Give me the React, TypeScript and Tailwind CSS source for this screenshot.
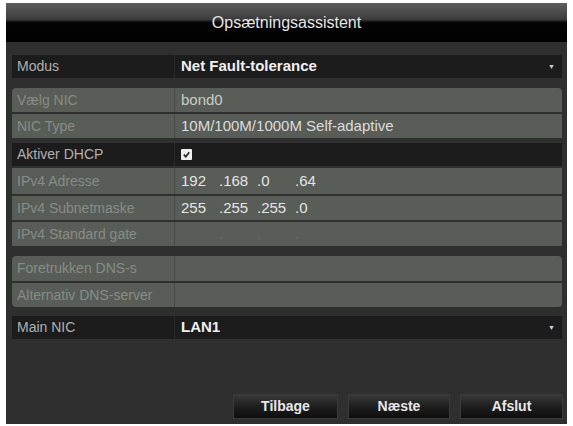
import React from "react";

const font = { fontFamily: '"Liberation Sans", Arial, sans-serif' };

function Row({
  label,
  children,
  dark,
  className = "",
}: {
  label: string;
  children?: React.ReactNode;
  dark?: boolean;
  className?: string;
}) {
  return (
    <div
      className={`flex items-center ${
        dark ? "bg-[#1c1c1c]" : "bg-[#585d57]"
      } ${className}`}
    >
      <div
        className={`w-[163px] h-full flex items-center pl-[5px] text-[14px] whitespace-nowrap overflow-hidden border-r ${
          dark ? "text-[#b0b0b0] border-[#2a2a2a]" : "text-[#878c86] border-[#464a45]"
        }`}
      >
        {label}
      </div>
      <div className="flex-1 h-full flex items-center pl-[6px] pr-[5px]">
        {children}
      </div>
    </div>
  );
}

function Ip({ parts, faint }: { parts: string[]; faint?: boolean }) {
  return (
    <div className={`flex text-[15px] ${faint ? "text-[#6a6e69]" : "text-[#e4e4e4]"}`}>
      {parts.map((p, i) => (
        <span key={i} className="w-[38px]">
          {i > 0 ? "." : ""}
          {p}
        </span>
      ))}
    </div>
  );
}

function Arrow() {
  return <span className="ml-auto mr-[2px] text-[7px] text-[#cfcfcf] leading-none">▼</span>;
}

export default function App() {
  return (
    <div className="w-[573px] h-[426px] bg-white pt-[3px] pl-[6px]" style={font}>
      <div className="w-[561px] h-[421px] bg-[#2f2f2f] flex flex-col">
        <div className="h-[39px] flex items-start justify-center pt-[8px] text-[16px] text-[#e6e6e6] bg-[linear-gradient(to_bottom,#5e5e5e_0%,#3c3c3c_42%,#050505_50%,#000_100%)]">
          Opsætningsassistent
        </div>

        <div className="flex flex-col pl-[6px] pr-[5px] pt-[13px]">
          <Row label="Modus" dark className="h-[23px]">
            <span className="text-[15px] font-bold text-[#f0f0f0]">Net Fault-tolerance</span>
            <Arrow />
          </Row>

          <div className="mt-[10px] flex flex-col gap-[2px] rounded-t-[4px] overflow-hidden">
            <Row label="Vælg NIC" className="h-[24px]">
              <span className="text-[15px] text-[#c9ccc8]">bond0</span>
            </Row>
            <Row label="NIC Type" className="h-[24px]">
              <span className="text-[15px] text-[#dcdcdc]">10M/100M/1000M Self-adaptive</span>
            </Row>
          </div>

          <Row label="Aktiver DHCP" dark className="h-[23px] mt-[5px]">
            <span className="w-[11px] h-[11px] bg-[#efefef] rounded-[1px] flex items-center justify-center">
              <svg width="9" height="9" viewBox="0 0 10 10">
                <path d="M2 5.2 L4.2 7.4 L8 2.6" fill="none" stroke="#222" strokeWidth="1.8" />
              </svg>
            </span>
          </Row>

          <div className="mt-[2px] flex flex-col gap-[2px]">
            <Row label="IPv4 Adresse" className="h-[26px]">
              <Ip parts={["192", "168", "0", "64"]} />
            </Row>
            <Row label="IPv4 Subnetmaske" className="h-[24px]">
              <Ip parts={["255", "255", "255", "0"]} />
            </Row>
            <Row label="IPv4 Standard gate" className="h-[24px]">
              <Ip parts={["", "", "", ""]} faint />
            </Row>
          </div>

          <div className="mt-[10px] flex flex-col gap-[2px] rounded-t-[4px] rounded-b-[4px] overflow-hidden">
            <Row label="Foretrukken DNS-s" className="h-[25px]" />
            <Row label="Alternativ DNS-server" className="h-[24px]" />
          </div>

          <Row label="Main NIC" dark className="h-[23px] mt-[9px]">
            <span className="text-[15px] font-bold text-[#f0f0f0]">LAN1</span>
            <Arrow />
          </Row>
        </div>

        <div className="flex justify-end gap-[10px] pr-[4px] mt-[55px]">
          {[
            ["Tilbage", "w-[105px]"],
            ["Næste", "w-[102px]"],
            ["Afslut", "w-[103px]"],
          ].map(([t, w]) => (
            <div
              key={t}
              className={`${w} h-[25px] flex items-center justify-center text-[14px] font-bold text-[#e8e8e8] border border-[#3a3a3a] bg-[linear-gradient(to_bottom,#3a3a3a_0%,#1e1e1e_50%,#0e0e0e_100%)]`}
            >
              {t}
            </div>
          ))}
        </div>
      </div>
    </div>
  );
}
